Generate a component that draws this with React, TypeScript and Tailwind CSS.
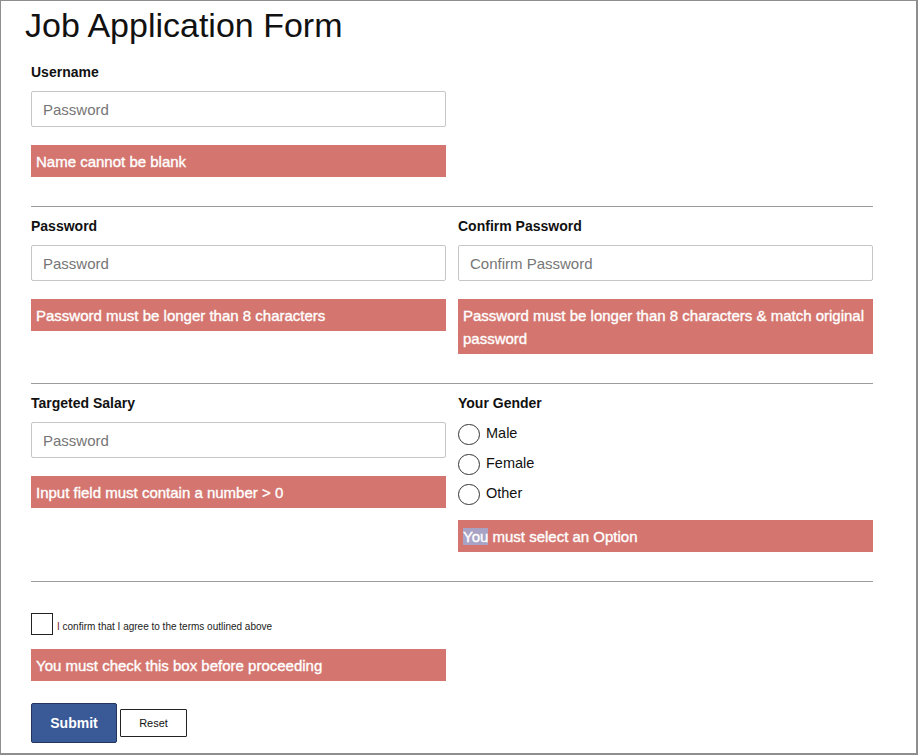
import React from "react";

const font = { fontFamily: '"Liberation Sans", Arial, sans-serif' };

function Label({ children }: { children: React.ReactNode }) {
  return <div className="text-[14px] leading-[20px] font-bold text-[#111]">{children}</div>;
}

function Input({ placeholder }: { placeholder: string }) {
  return (
    <input
      placeholder={placeholder}
      className="mt-[9px] block h-[36px] w-full rounded-[2px] border border-[#c6c6c6] bg-white px-[11px] text-[15px] text-[#222] placeholder:text-[#767676] outline-none"
      style={font}
    />
  );
}

function ErrorBox({ children, className = "" }: { children: React.ReactNode; className?: string }) {
  return (
    <div
      className={`bg-[#d4766f] pl-[5px] pr-[2px] pt-[5px] pb-[4px] text-[15px] leading-[23px] text-white [-webkit-text-stroke:0.35px_white] ${className}`}
    >
      {children}
    </div>
  );
}

function Divider() {
  return <div className="mt-[29px] h-px w-full bg-[#9c9c9c]" />;
}

function Radio({ label }: { label: string }) {
  return (
    <div className="flex h-[30px] items-center gap-[6px]">
      <span className="block h-[21px] w-[22px] rounded-full border border-[#333]" />
      <span className="text-[14.5px] text-[#111]">{label}</span>
    </div>
  );
}

export default function App() {
  return (
    <div
      className="box-border h-[755px] w-[918px] border-t border-l border-r-2 border-b-2 border-[#8e8e8e] bg-white pl-[30px]"
      style={font}
    >
      <div className="w-[842px]">
        <h1 className="ml-[-6px] mt-[4px] text-[34px] leading-[40px] font-normal text-[#111]">
          Job Application Form
        </h1>

        <div className="mt-[17px] w-[415px]">
          <Label>Username</Label>
          <Input placeholder="Password" />
          <ErrorBox className="mt-[18px]">Name cannot be blank</ErrorBox>
        </div>

        <Divider />

        <div className="mt-[9px] grid grid-cols-[415px_415px] gap-x-[12px] items-start">
          <div>
            <Label>Password</Label>
            <Input placeholder="Password" />
            <ErrorBox className="mt-[18px]">Password must be longer than 8 characters</ErrorBox>
          </div>
          <div>
            <Label>Confirm Password</Label>
            <Input placeholder="Confirm Password" />
            <ErrorBox className="mt-[18px]">
              Password must be longer than 8 characters &amp; match original
              <br />
              password
            </ErrorBox>
          </div>
        </div>

        <Divider />

        <div className="mt-[9px] grid grid-cols-[415px_415px] gap-x-[12px] items-start">
          <div>
            <Label>Targeted Salary</Label>
            <Input placeholder="Password" />
            <ErrorBox className="mt-[18px]">Input field must contain a number &gt; 0</ErrorBox>
          </div>
          <div>
            <Label>Your Gender</Label>
            <div className="mt-[6px]">
              <Radio label="Male" />
              <Radio label="Female" />
              <Radio label="Other" />
            </div>
            <ErrorBox className="mt-[11px]">
              <span className="bg-[#a8a3c5]">You</span> must select an Option
            </ErrorBox>
          </div>
        </div>

        <Divider />

        <div className="mt-[31px] flex items-end gap-[4px]">
          <span className="block h-[22px] w-[22px] border border-[#222] bg-white" />
          <span className="mb-[1px] text-[10px] leading-[14px] text-[#222]">
            <span className="text-[#7a1f1f]">I</span> confirm that I agree to the terms outlined above
          </span>
        </div>

        <ErrorBox className="mt-[14px] w-[415px]">You must check this box before proceeding</ErrorBox>

        <div className="mt-[22px] flex items-center gap-[3px]">
          <button
            className="h-[40px] w-[86px] rounded-[2px] border border-[#24365e] bg-[#3a5997] text-[14px] font-bold text-white"
            style={font}
          >
            Submit
          </button>
          <button
            className="h-[28px] w-[67px] rounded-[1px] border border-[#222] bg-white text-[11px] text-[#111]"
            style={font}
          >
            Reset
          </button>
        </div>
      </div>
    </div>
  );
}
